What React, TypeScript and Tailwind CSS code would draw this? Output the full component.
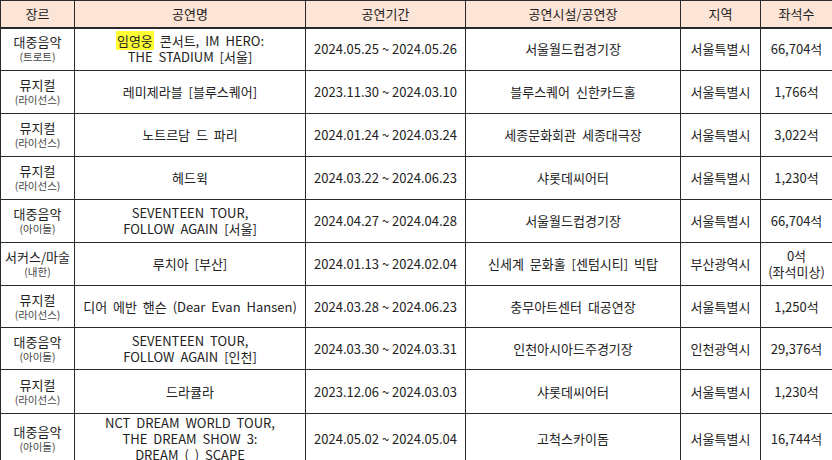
import React from 'react';

type Row = {
    genre: string;
    sub: string;
    title: React.ReactNode;
    period: string;
    venue: string;
    region: string;
    seats: React.ReactNode;
    h: string;
};

const rows: Row[] = [
    {
        genre: '대중음악',
        sub: '(트로트)',
        title: (
            <>
                <span className="bg-[#ffff33] px-[1px]">임영웅</span> 콘서트, IM HERO:
                <br />
                THE STADIUM [서울]
            </>
        ),
        period: '2024.05.25 ~ 2024.05.26',
        venue: '서울월드컵경기장',
        region: '서울특별시',
        seats: '66,704석',
        h: 'h-[43px]',
    },
    {
        genre: '뮤지컬',
        sub: '(라이선스)',
        title: '레미제라블 [블루스퀘어]',
        period: '2023.11.30 ~ 2024.03.10',
        venue: '블루스퀘어 신한카드홀',
        region: '서울특별시',
        seats: '1,766석',
        h: 'h-[43px]',
    },
    {
        genre: '뮤지컬',
        sub: '(라이선스)',
        title: '노트르담 드 파리',
        period: '2024.01.24 ~ 2024.03.24',
        venue: '세종문화회관 세종대극장',
        region: '서울특별시',
        seats: '3,022석',
        h: 'h-[43px]',
    },
    {
        genre: '뮤지컬',
        sub: '(라이선스)',
        title: '헤드윅',
        period: '2024.03.22 ~ 2024.06.23',
        venue: '샤롯데씨어터',
        region: '서울특별시',
        seats: '1,230석',
        h: 'h-[43px]',
    },
    {
        genre: '대중음악',
        sub: '(아이돌)',
        title: (
            <>
                SEVENTEEN TOUR,
                <br />
                FOLLOW AGAIN [서울]
            </>
        ),
        period: '2024.04.27 ~ 2024.04.28',
        venue: '서울월드컵경기장',
        region: '서울특별시',
        seats: '66,704석',
        h: 'h-[43px]',
    },
    {
        genre: '서커스/마술',
        sub: '(내한)',
        title: '루치아 [부산]',
        period: '2024.01.13 ~ 2024.02.04',
        venue: '신세계 문화홀 [센텀시티] 빅탑',
        region: '부산광역시',
        seats: (
            <>
                0석
                <br />
                (좌석미상)
            </>
        ),
        h: 'h-[43px]',
    },
    {
        genre: '뮤지컬',
        sub: '(라이선스)',
        title: '디어 에반 핸슨 (Dear Evan Hansen)',
        period: '2024.03.28 ~ 2024.06.23',
        venue: '충무아트센터 대공연장',
        region: '서울특별시',
        seats: '1,250석',
        h: 'h-[42px]',
    },
    {
        genre: '대중음악',
        sub: '(아이돌)',
        title: (
            <>
                SEVENTEEN TOUR,
                <br />
                FOLLOW AGAIN [인천]
            </>
        ),
        period: '2024.03.30 ~ 2024.03.31',
        venue: '인천아시아드주경기장',
        region: '인천광역시',
        seats: '29,376석',
        h: 'h-[42px]',
    },
    {
        genre: '뮤지컬',
        sub: '(라이선스)',
        title: '드라큘라',
        period: '2023.12.06 ~ 2024.03.03',
        venue: '샤롯데씨어터',
        region: '서울특별시',
        seats: '1,230석',
        h: 'h-[44px]',
    },
    {
        genre: '대중음악',
        sub: '(아이돌)',
        title: (
            <>
                NCT DREAM WORLD TOUR,
                <br />
                THE DREAM SHOW 3:
                <br />
                DREAM ( ) SCAPE
            </>
        ),
        period: '2024.05.02 ~ 2024.05.04',
        venue: '고척스카이돔',
        region: '서울특별시',
        seats: '16,744석',
        h: 'h-[50px]',
    },
];

const headers = ['장르', '공연명', '공연기간', '공연시설/공연장', '지역', '좌석수'];

const cell = 'border border-[#2a2a2a] p-0 text-center align-middle';

export default function App() {
    return (
        <div
            className="w-[832px] h-[460px] overflow-hidden bg-white text-[#222] text-[13px] leading-[16px] [word-spacing:3px]"
            style={{ fontFamily: '"Noto Sans CJK KR", "Noto Sans", sans-serif' }}
        >
            <table className="w-[832px] table-fixed border-collapse">
                <colgroup>
                    <col className="w-[74px]" />
                    <col className="w-[231px]" />
                    <col className="w-[160px]" />
                    <col className="w-[215px]" />
                    <col className="w-[80px]" />
                    <col className="w-[72px]" />
                </colgroup>
                <thead>
                    <tr className="h-[27px] bg-[#fce4d6]">
                        {headers.map((h) => (
                            <th key={h} className={`${cell} font-normal border-b-2`}>
                                {h}
                            </th>
                        ))}
                    </tr>
                </thead>
                <tbody>
                    {rows.map((r, i) => (
                        <tr key={i} className={r.h}>
                            <td className={cell}>
                                <div>{r.genre}</div>
                                <div className="text-[10.5px] leading-[14px] text-[#444] [word-spacing:0px]">{r.sub}</div>
                            </td>
                            <td className={cell}>{r.title}</td>
                            <td className={`${cell} [word-spacing:0px]`}>{r.period}</td>
                            <td className={cell}>{r.venue}</td>
                            <td className={cell}>{r.region}</td>
                            <td className={cell}>{r.seats}</td>
                        </tr>
                    ))}
                </tbody>
            </table>
        </div>
    );
}
